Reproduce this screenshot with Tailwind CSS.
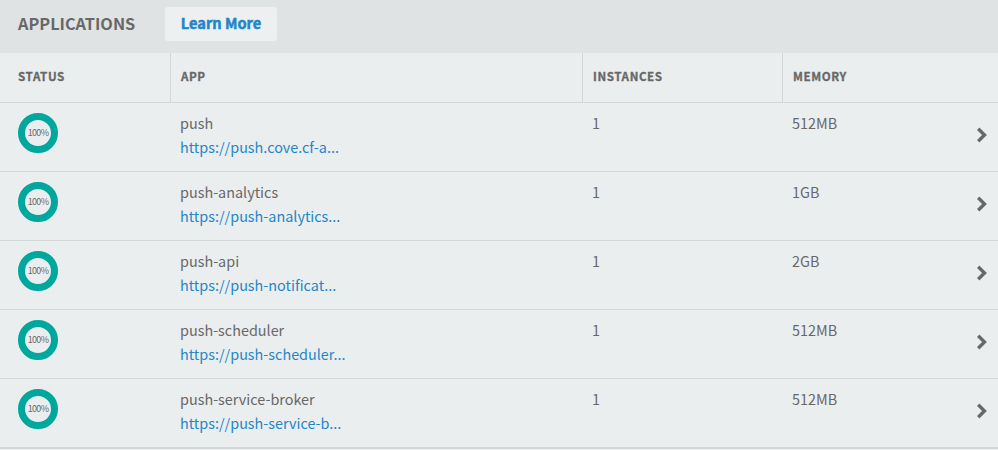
<!DOCTYPE html>
<html lang="en">
<head>
<meta charset="utf-8">
<title>Applications</title>
<script src="https://cdn.jsdelivr.net/npm/@tailwindcss/browser@4"></script>
</head>
<body class="w-[998px] h-[450px] overflow-hidden bg-[#ebeeef] text-[#686868] font-['Noto_Sans_CJK_SC','Source_Sans_Pro',sans-serif] text-[14.4px] leading-6">
<header class="flex h-[53px] items-start bg-[#dfe3e4] pl-[18px]">
  <h1 class="w-[147px] pt-[11px] text-[16.3px] leading-6 font-bold">APPLICATIONS</h1>
  <a class="mt-[7px] flex h-[34px] w-[112px] items-center justify-center rounded-[3px] bg-[#eeeff1] pb-[3px] text-[14.6px] font-bold text-[#1f86c8] [-webkit-text-stroke:0.5px_#1f86c8]">Learn More</a>
</header>
<div class="grid h-[50px] grid-cols-[170px_412px_200px_216px] border-b border-[#d2d8d8] text-[11.6px] leading-[46px] font-bold tracking-[0.6px] [-webkit-text-stroke:0.3px_#686868]">
  <div class="pl-[18px]">STATUS</div>
  <div class="border-l border-[#d2d8d8] pl-[10px]">APP</div>
  <div class="border-l border-[#d2d8d8] pl-[10px]">INSTANCES</div>
  <div class="border-l border-[#d2d8d8] pl-[10px]">MEMORY</div>
</div>
<main id="rows"></main>
<div class="h-px bg-[#d2d8d8]"></div>
<template id="row">
  <div class="grid h-[69px] grid-cols-[180px_412px_200px_1fr_21px] border-b border-[#d2d8d8] pt-[8px]">
    <div class="pt-[2px] pl-[18px]"><div class="flex size-10 items-center justify-center rounded-full border-[7px] border-[#00a79d] pb-[2px] text-[9px] leading-none tracking-[-0.7px]"><span>100%</span></div></div>
    <div><div data-f="name"></div><div data-f="url" class="text-[#1f86c8]"></div></div>
    <div>1</div>
    <div data-f="mem"></div>
    <svg class="mt-[16px]" width="12" height="16" viewBox="0 0 12 16" fill="none" stroke="#686868" stroke-width="3.4"><path d="M1.2 1.7 7.5 8 1.2 14.3"/></svg>
  </div>
</template>
<script>
const apps = [
  ["push", "https://push.cove.cf-a...", "512MB"],
  ["push-analytics", "https://push-analytics...", "1GB"],
  ["push-api", "https://push-notificat...", "2GB"],
  ["push-scheduler", "https://push-scheduler...", "512MB"],
  ["push-service-broker", "https://push-service-b...", "512MB"]
];
for (const [name, url, mem] of apps) {
  const r = document.getElementById("row").content.cloneNode(true);
  r.querySelector("[data-f=name]").textContent = name;
  r.querySelector("[data-f=url]").textContent = url;
  r.querySelector("[data-f=mem]").textContent = mem;
  document.getElementById("rows").append(r);
}
</script>
</body>
</html>
